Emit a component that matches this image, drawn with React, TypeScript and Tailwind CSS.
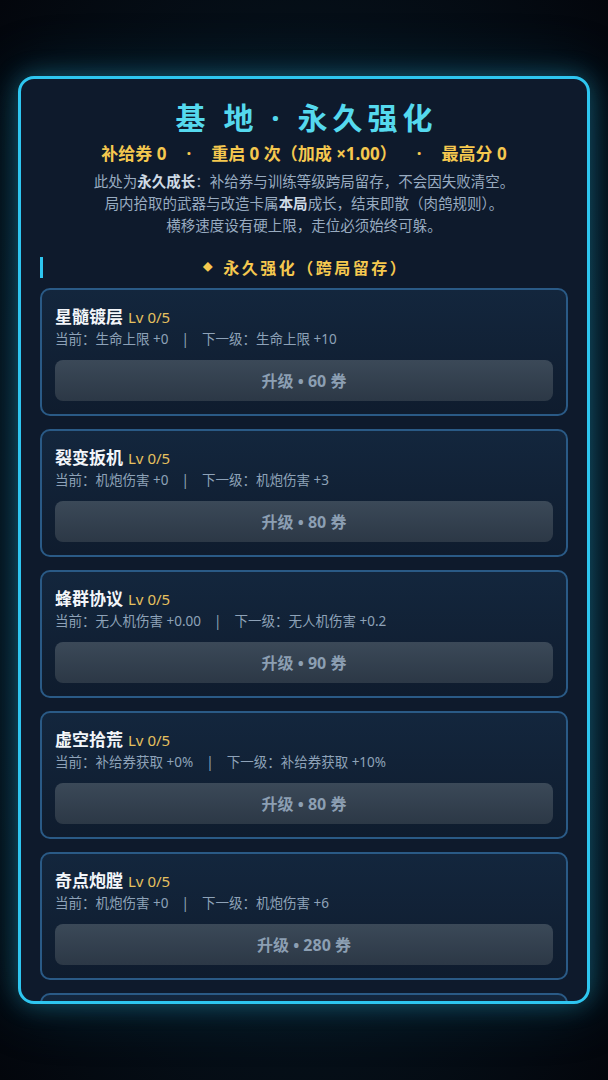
import React from "react";

type Upgrade = {
  name: string;
  cur: string;
  next: string;
  cost: number;
};

const upgrades: Upgrade[] = [
  { name: "星髓镀层", cur: "生命上限 +0", next: "生命上限 +10", cost: 60 },
  { name: "裂变扳机", cur: "机炮伤害 +0", next: "机炮伤害 +3", cost: 80 },
  { name: "蜂群协议", cur: "无人机伤害 +0.00", next: "无人机伤害 +0.2", cost: 90 },
  { name: "虚空拾荒", cur: "补给券获取 +0%", next: "补给券获取 +10%", cost: 80 },
  { name: "奇点炮膛", cur: "机炮伤害 +0", next: "机炮伤害 +6", cost: 280 },
  { name: "相位护盾", cur: "护盾 +0", next: "护盾 +5", cost: 120 },
];

function UpgradeCard({ item }: { item: Upgrade }) {
  return (
    <div className="shrink-0 rounded-[10px] border-2 border-[#2a5a86] bg-gradient-to-b from-[#13263d] to-[#0f1c2e] px-[13px] pt-[15px] pb-[13px]">
      <div className="flex h-[24px] items-baseline gap-[5px] leading-[24px]">
        <span className="text-[17px] font-bold text-[#f3f6fa]">{item.name}</span>
        <span className="text-[15px] text-[#e6c15f]">Lv 0/5</span>
      </div>
      <div className="h-[20px] text-[13.5px] leading-[20px] text-[#8ea2b8]">
        当前：{item.cur}
        <span className="mx-[13px]">|</span>
        下一级：{item.next}
      </div>
      <button
        type="button"
        className="mt-[11px] flex h-[41px] w-full items-center justify-center rounded-[8px] bg-gradient-to-b from-[#3b4958] to-[#2c3846] text-[16px] font-bold text-[#8c9fb3]"
      >
        升级 • {item.cost} 券
      </button>
    </div>
  );
}

export default function App() {
  return (
    <div
      className="flex h-[1080px] w-full items-center justify-center bg-[radial-gradient(ellipse_at_50%_50%,#0b2333_0%,#06121c_55%,#03060c_100%)] px-[18px]"
      style={{ fontFamily: '"Noto Sans", "Noto Sans CJK SC", sans-serif' }}
    >
      <div className="flex h-[928px] w-full flex-col overflow-hidden rounded-[16px] border-[3px] border-[#2ec6f0] bg-[#0e1a2c] px-[19px] pt-[20px] shadow-[0_0_24px_rgba(46,198,240,0.35),0_0_60px_rgba(20,120,160,0.25)]">
        <h1 className="pl-[5px] text-center text-[30px] font-bold leading-[38px] tracking-[5px] text-[#55d9ee]">
          基 地 · 永久强化
        </h1>
        <div className="mt-[5px] flex justify-center gap-[20px] text-[17px] font-bold leading-[24px] text-[#f5c84f]">
          <span>补给券 0</span>
          <span>·</span>
          <span>重启 0 次（加成 ×1.00）</span>
          <span>·</span>
          <span>最高分 0</span>
        </div>
        <div className="mt-[4px] text-center text-[14.5px] leading-[22px] text-[#98abc0]">
          <p>
            此处为<b className="text-[#cfdae6]">永久成长</b>：补给券与训练等级跨局留存，不会因失败清空。
          </p>
          <p>
            局内拾取的武器与改造卡属<b className="text-[#cfdae6]">本局</b>成长，结束即散（肉鸽规则）。
          </p>
          <p>横移速度设有硬上限，走位必须始终可躲。</p>
        </div>
        <div className="mt-[21px] flex h-[21px] items-center justify-center border-l-[3px] border-[#2ec6f0] text-[16px] font-bold tracking-[2.5px] text-[#f5c84f]">
          <span className="mr-[8px] text-[10px]">◆</span>永久强化（跨局留存）
        </div>
        <div className="mt-[10px] flex flex-col gap-[13px]">
          {upgrades.map((u) => (
            <UpgradeCard key={u.name} item={u} />
          ))}
        </div>
      </div>
    </div>
  );
}
